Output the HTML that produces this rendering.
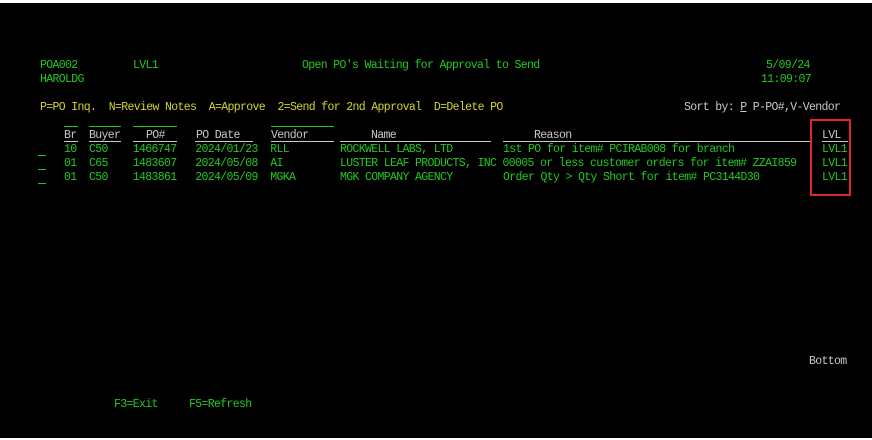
<!DOCTYPE html>
<html><head><style>
html,body{margin:0;padding:0;background:#fff;width:872px;height:440px;overflow:hidden}
#s{position:absolute;left:0;top:3px;width:872px;height:435px;background:#000}
.t{position:absolute;font-family:"Liberation Mono",monospace;font-size:11.5px;letter-spacing:-0.65px;line-height:12px;white-space:pre;color:#22c822}
.y{color:#d4d42c}.w{color:#c8c8c8}
.u{text-decoration:underline}
.l{position:absolute;height:1px}
</style></head><body>
<div id="s"></div>
<div class="t" style="left:40px;top:60px">POA002</div>
<div class="t" style="left:133px;top:60px">LVL1</div>
<div class="t" style="left:302px;top:60px">Open PO's Waiting for Approval to Send</div>
<div class="t" style="left:766px;top:60px">5/09/24</div>
<div class="t" style="left:40px;top:74px">HAROLDG</div>
<div class="t" style="left:761px;top:74px">11:09:07</div>
<div class="t y" style="left:40px;top:102px">P=PO Inq.  N=Review Notes  A=Approve  2=Send for 2nd Approval  D=Delete PO</div>
<div class="t w" style="left:684px;top:102px">Sort by: <span class="u">P</span> P-PO#,V-Vendor</div>

<div class="l" style="left:64px;width:14px;top:126px;background:#22c822"></div>
<div class="l" style="left:89px;width:32px;top:126px;background:#22c822"></div>
<div class="l" style="left:133px;width:44px;top:126px;background:#22c822"></div>
<div class="l" style="left:271px;width:63px;top:126px;background:#22c822"></div>

<div class="t w" style="left:64px;top:130px">Br</div>
<div class="t w" style="left:89px;top:130px">Buyer</div>
<div class="t w" style="left:146px;top:130px">PO#</div>
<div class="t w" style="left:196px;top:130px">PO Date</div>
<div class="t w" style="left:271px;top:130px">Vendor</div>
<div class="t w" style="left:371px;top:130px">Name</div>
<div class="t w" style="left:534px;top:130px">Reason</div>
<div class="t w" style="left:822px;top:130px">LVL</div>
<div class="l" style="left:64px;width:14px;top:141px;background:#c8c8c8"></div>
<div class="l" style="left:89px;width:32px;top:141px;background:#c8c8c8"></div>
<div class="l" style="left:133px;width:44px;top:141px;background:#c8c8c8"></div>
<div class="l" style="left:195px;width:58px;top:141px;background:#c8c8c8"></div>
<div class="l" style="left:271px;width:63px;top:141px;background:#c8c8c8"></div>
<div class="l" style="left:340px;width:151px;top:141px;background:#c8c8c8"></div>
<div class="l" style="left:503px;width:309px;top:141px;background:#c8c8c8"></div>
<div class="l" style="left:822px;width:26px;top:141px;background:#c8c8c8"></div>

<div class="l" style="left:38px;width:8px;top:155px;background:#22c822"></div>
<div class="l" style="left:38px;width:8px;top:169px;background:#22c822"></div>
<div class="l" style="left:38px;width:8px;top:183px;background:#22c822"></div>

<div class="t" style="left:64px;top:144px">10  C50    1466747   2024/01/23  RLL</div>
<div class="t" style="left:340px;top:144px">ROCKWELL LABS, LTD</div>
<div class="t" style="left:503px;top:144px">1st PO for item# PCIRAB008 for branch</div>
<div class="t" style="left:822px;top:144px">LVL1</div>
<div class="t" style="left:64px;top:158px">01  C65    1483607   2024/05/08  AI</div>
<div class="t" style="left:340px;top:158px">LUSTER LEAF PRODUCTS, INC 00005 or less customer orders for item# ZZAI859</div>
<div class="t" style="left:822px;top:158px">LVL1</div>
<div class="t" style="left:64px;top:172px">01  C50    1483861   2024/05/09  MGKA</div>
<div class="t" style="left:340px;top:172px">MGK COMPANY AGENCY</div>
<div class="t" style="left:503px;top:172px">Order Qty &gt; Qty Short for item# PC3144D30</div>
<div class="t" style="left:822px;top:172px">LVL1</div>

<div style="position:absolute;left:810px;top:119px;width:37px;height:73px;border:2px solid #e0262b"></div>

<div class="t w" style="left:809px;top:356px">Bottom</div>
<div class="t" style="left:114px;top:399px">F3=Exit</div>
<div class="t" style="left:189px;top:399px">F5=Refresh</div>
</body></html>
